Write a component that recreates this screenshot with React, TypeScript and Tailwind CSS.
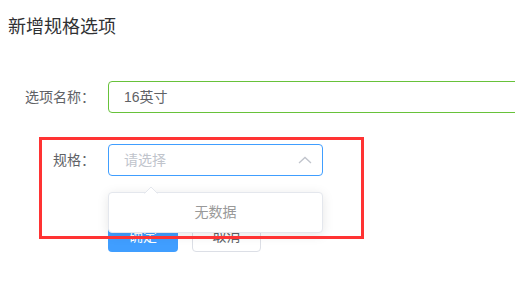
import React from "react";

const font = { fontFamily: '"Liberation Sans", "Noto Sans CJK SC", sans-serif' };

const SpecForm = () => {
  return (
    <div className="relative w-[515px] h-[289px] overflow-hidden bg-white" style={font}>
      <div className="pt-[15px] pl-[8px] text-[18px] leading-[24px] text-[#303133]">新增规格选项</div>

      <div className="mt-[42px] flex items-center">
        <label className="w-[96px] shrink-0 whitespace-nowrap pr-[1px] text-right text-[14px] leading-[32px] text-[#606266]">选项名称：</label>
        <div className="ml-[12px] h-[32px] w-[460px] shrink-0 rounded-[4px] border border-[#67c23a] px-[15px] text-[14px] leading-[30px] text-[#606266]">
          16英寸
        </div>
      </div>

      <div className="mt-[31px] flex items-center">
        <label className="w-[96px] shrink-0 whitespace-nowrap pr-[1px] text-right text-[14px] leading-[32px] text-[#606266]">规格：</label>
        <div className="ml-[12px] flex h-[32px] w-[215px] shrink-0 items-center justify-between rounded-[4px] border border-[#409eff] pl-[15px] pr-[10px] text-[14px] text-[#c0c4cc]">
          <span>请选择</span>
          <svg width="14" height="8" viewBox="0 0 14 8" fill="none">
            <path d="M1 7 L7 1.5 L13 7" stroke="#c0c4cc" strokeWidth="1.3" />
          </svg>
        </div>
      </div>

      <div className="mt-[44px] ml-[108px] flex gap-[14px]">
        <button className="h-[32px] w-[70px] rounded-[4px] bg-[#409eff] text-[14px] text-white">确定</button>
        <button className="h-[32px] w-[69px] rounded-[4px] border border-[#dcdfe6] bg-white text-[14px] text-[#606266]">取消</button>
      </div>

      {/* dropdown popper */}
      <div className="absolute left-[108px] top-[192px] flex h-[41px] w-[215px] items-center justify-center rounded-[4px] border border-[#e4e7ed] bg-white text-[14px] text-[#999] shadow-[0_2px_12px_0_rgba(0,0,0,0.1)]">
        无数据
        <svg className="absolute left-[35px] top-[-7px]" width="14" height="8" viewBox="0 0 14 8">
          <path d="M0 8 L7 1 L14 8 Z" fill="#fff" />
          <path d="M0.5 7.5 L7 1 L13.5 7.5" fill="none" stroke="#e4e7ed" strokeWidth="1" />
        </svg>
      </div>

      {/* annotation */}
      <div className="pointer-events-none absolute left-[39px] top-[137px] h-[102px] w-[325px] border-[3px] border-[#ff3333]" />
    </div>
  );
};

export default function App() {
  return <SpecForm />;
}
